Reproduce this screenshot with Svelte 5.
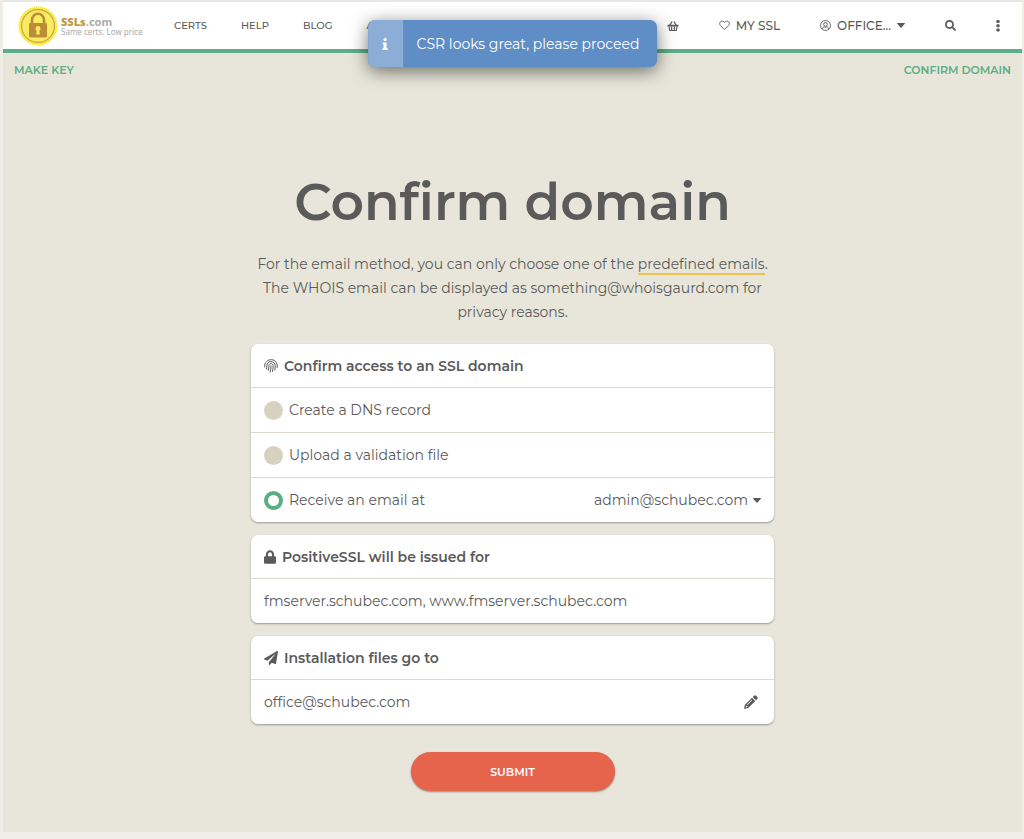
<script>
  let method = $state('email');
  let email = $state('admin@schubec.com');

  const links = ['CERTS', 'HELP', 'BLOG', 'API'];
  const methods = [
    { id: 'dns', label: 'Create a DNS record' },
    { id: 'file', label: 'Upload a validation file' },
    { id: 'email', label: 'Receive an email at' }
  ];
</script>

<div class="page">
  <header>
    <a class="brand" href="#home">
      <svg width="40" height="40" viewBox="0 0 40 40" aria-hidden="true">
        <circle cx="20" cy="20" r="18.6" fill="#f7ea4e" />
        <circle cx="20" cy="20" r="18.8" fill="none" stroke="#f4e52f" stroke-width="1.6" stroke-dasharray="1.2 0.8" />
        <circle cx="20" cy="20" r="16.4" fill="#f8ec62" stroke="#cfa63a" stroke-width="1.2" />
        <path d="M14 18v-4.2a6 6 0 0 1 12 0V18" fill="none" stroke="#bd8c36" stroke-width="2.6" />
        <rect x="11" y="17" width="18" height="14.4" rx="1.4" fill="#bd8c36" />
        <path d="M20 20a2.6 2.6 0 0 1 1.3 4.8l.6 3.7h-3.8l.6-3.7A2.6 2.6 0 0 1 20 20z" fill="#f8ec62" />
      </svg>
      <span class="words">
        <span class="name"><b>SSLs</b>.com</span>
        <span class="tag">Same certs. Low price</span>
      </span>
    </a>
    <nav class="main">
      {#each links as link}
        <a href="#{link.toLowerCase()}">{link}</a>
      {/each}
    </nav>
    <nav class="account">
      <a href="#cart" aria-label="Cart">
        <svg width="12" height="12" viewBox="0 0 24 24" fill="none" stroke="currentColor" aria-hidden="true">
          <path d="M5.5 11 10 3M18.500 11 14 3" stroke-width="2.600" />
          <path d="M1 9.500h22v3.500H1z" fill="currentColor" stroke="none" />
          <path d="M4 13l1.500 8h13L20 13M9.300 13v8M14.700 13v8" stroke-width="2.400" />
        </svg>
      </a>
      <a href="#my-ssl">
        <svg width="11" height="11" viewBox="0 0 24 24" fill="none" stroke="currentColor" stroke-width="2" aria-hidden="true">
          <path d="M12 21 3.300 12.200C-.6 8 2.200 2.500 7 2.500c2.300 0 4 1.200 5 3 1-1.800 2.700-3 5-3 4.800 0 7.600 5.500 3.700 9.700z" />
        </svg>
        MY SSL
      </a>
      <button type="button">
        <svg width="11" height="11" viewBox="0 0 24 24" fill="none" stroke="currentColor" stroke-width="2" aria-hidden="true">
          <circle cx="12" cy="12" r="10.800" />
          <circle cx="12" cy="9.500" r="4" />
          <path d="M5 19.500c.5-3 2.300-4.500 4-4.500 1 0 1.500.6 3 .6s2-.6 3-.6c1.700 0 3.500 1.500 4 4.500" />
        </svg>
        OFFICE...
        <svg class="caret" width="8" height="5" viewBox="0 0 8 5" fill="currentColor" aria-hidden="true"><path d="M.4 0h7.200q.6.200.2.700L4.500 4.600q-.5.500-1 0L.2.700Q-.2.200.4 0z" /></svg>
      </button>
      <button type="button" aria-label="Search">
        <svg width="11" height="11" viewBox="0 0 512 512" fill="currentColor" aria-hidden="true"><path d="M505 442.700L405.300 343c-4.500-4.500-10.600-7-17-7H372c27.600-35.300 44-79.700 44-128C416 93.100 322.900 0 208 0S0 93.100 0 208s93.100 208 208 208c48.300 0 92.700-16.400 128-44v16.300c0 6.400 2.500 12.500 7 17l99.700 99.700c9.400 9.400 24.600 9.400 33.900 0l28.300-28.300c9.400-9.400 9.400-24.600.1-34zM208 336c-70.700 0-128-57.200-128-128 0-70.700 57.200-128 128-128 70.700 0 128 57.200 128 128 0 70.700-57.200 128-128 128z" /></svg>
      </button>
      <button type="button" aria-label="More">
        <svg width="4" height="12" viewBox="0 0 4 12" fill="currentColor" aria-hidden="true"><rect x=".3" y="0" width="3.400" height="3" rx="1.200" /><rect x=".3" y="4.200" width="3.400" height="3" rx="1.200" /><rect x=".3" y="8.400" width="3.400" height="3" rx="1.200" /></svg>
      </button>
    </nav>
  </header>

  <div class="toast" role="status">
    <span class="info">
      <svg width="6" height="12" viewBox="0 0 6 12" fill="#fff" aria-hidden="true"><circle cx="3" cy="1.600" r="1.600" /><path d="M.6 4.500h3.900V10H5.500v2H.5v-2h1V6.500H.6z" /></svg>
    </span>
    <span class="message">CSR looks great, please proceed</span>
  </div>

  <div class="steps">
    <a href="#make-key">MAKE KEY</a>
    <a href="#confirm">CONFIRM DOMAIN</a>
  </div>

  <main>
    <h1>Confirm domain</h1>
    <p>
      For the email method, you can only choose one of the <a href="#emails">predefined emails</a>.<br />
      The WHOIS email can be displayed as something@whoisgaurd.com for<br />
      privacy reasons.
    </p>

    <form onsubmit={(e) => e.preventDefault()}>
      <section>
        <h2>
          <svg width="14" height="14" viewBox="0 0 28 28" fill="none" stroke="currentColor" stroke-width="2" stroke-linecap="round" aria-hidden="true">
            <path d="M1.500 16v-3.500C1.500 10.500 2 9 3 7.500M5.500 4.500C11 -.5 20 .2 24.300 6.500c1.500 2.200 2.200 4.500 2.200 7.500v3" />
            <path d="M5 20c.6-2.500.7-4.500.7-7C5.700 8.500 9.500 5 14 5s8.500 3.600 8.500 8.500c0 3-.2 6-.8 8.500" />
            <path d="M8.800 22.500c.8-3.500 1-6 1-9.500 0-2.200 2-4 4.200-4s4.300 1.800 4.300 4.300c0 4-.4 8-1.400 11.700" />
            <path d="M14 13.500c0 4.500-.5 9-1.800 13" />
          </svg>
          Confirm access to an SSL domain
        </h2>
        {#each methods as m}
          <div class="row">
            <label>
              <input type="radio" name="method" value={m.id} bind:group={method} />
              {m.label}
            </label>
            {#if m.id === 'email'}
              <span class="picker">
                <select bind:value={email} aria-label="Email address">
                  <option value="admin@schubec.com">admin@schubec.com</option>
                </select>
                <svg class="caret" width="8" height="5" viewBox="0 0 8 5" fill="currentColor" aria-hidden="true"><path d="M.4 0h7.200q.6.200.2.700L4.500 4.600q-.5.500-1 0L.2.700Q-.2.200.4 0z" /></svg>
              </span>
            {/if}
          </div>
        {/each}
      </section>

      <section>
        <h2>
          <svg width="12" height="14" viewBox="0 0 448 512" fill="currentColor" aria-hidden="true"><path d="M400 224h-24v-72C376 68.200 307.800 0 224 0S72 68.200 72 152v72H48c-26.500 0-48 21.500-48 48v192c0 26.500 21.500 48 48 48h352c26.500 0 48-21.500 48-48V272c0-26.500-21.500-48-48-48zm-104 0H152v-72c0-39.700 32.300-72 72-72s72 32.300 72 72v72z" /></svg>
          PositiveSSL will be issued for
        </h2>
        <div class="row">fmserver.schubec.com, www.fmserver.schubec.com</div>
      </section>

      <section>
        <h2>
          <svg width="14" height="14" viewBox="0 0 512 512" fill="currentColor" aria-hidden="true"><path d="M476 3.200L12.500 270.600c-18.100 10.400-15.800 35.600 2.200 43.200L121 358.400l287.300-253.200c5.500-4.900 13.300 2.600 8.600 8.300L176 407v80.500c0 23.600 28.500 32.900 42.500 15.800L282 426l124.600 52.200c14.200 6 30.400-2.900 33-18.200l72-432C515 7.800 493.300-6.800 476 3.200z" /></svg>
          Installation files go to
        </h2>
        <div class="row">
          office@schubec.com
          <button class="edit" type="button" aria-label="Edit email">
            <svg width="14" height="14" viewBox="0 0 28 28" fill="currentColor" aria-hidden="true">
              <path d="M20 1.500q2-2 4 0L26.500 4q2 2 0 4l-2.600 2.600-6.500-6.500z" />
              <path fill-rule="evenodd" d="M16 5.500l6.500 6.500L8.300 26.200 0 28l1.800-8.300zM15.300 9.500 6 18.800l1 1 9.300-9.300zM4.300 21.200l-1 3.600 3.600-.9v-1.700H5.700z" />
            </svg>
          </button>
        </div>
      </section>

      <button class="submit" type="submit">SUBMIT</button>
    </form>
  </main>
</div>

<style>
  :global(body) {
    margin: 0;
    background: #f0ede6;
  }
  .page {
    position: relative;
    margin: 0 2px 7px 3px;
    border-top: 2px solid #e6e6e6;
    background: #e8e6da;
    color: #5a5a5a;
    font-family: Montserrat, Inter, sans-serif;
    font-size: 14px;
    box-sizing: border-box;
    min-height: calc(100vh - 7px);
  }
  a {
    color: inherit;
    text-decoration: none;
  }
  button {
    padding: 0;
    border: 0;
    background: none;
    color: inherit;
    font: inherit;
    cursor: pointer;
  }
  svg {
    flex: none;
  }
  header {
    display: flex;
    align-items: center;
    height: 47px;
    padding: 0 22px 0 15px;
    background: #fff;
    border-bottom: 4px solid #5bae85;
  }
  .brand {
    display: flex;
    align-items: center;
    gap: 3px;
    width: 156px;
  }
  .words {
    display: flex;
    flex-direction: column;
    font-family: "Noto Sans", "Open Sans", sans-serif;
    color: #aaa;
    white-space: nowrap;
  }
  .name {
    font-size: 11px;
    line-height: 11px;
    font-weight: 700;
  }
  .name b {
    color: #c29a41;
  }
  .tag {
    font-size: 8px;
    line-height: 9px;
  }
  nav {
    display: flex;
    align-items: center;
  }
  .main {
    gap: 34px;
    font-size: 10px;
    font-weight: 500;
  }
  .account {
    margin-left: auto;
    gap: 40px;
    font-size: 12px;
    font-weight: 500;
  }
  .account a,
  .account button {
    display: flex;
    align-items: center;
    gap: 6px;
  }
  .toast {
    position: absolute;
    top: 18px;
    left: 50%;
    transform: translateX(-50%);
    display: flex;
    height: 47px;
    border-radius: 7px;
    overflow: hidden;
    background: #5f8dc5;
    color: #fff;
    white-space: nowrap;
    box-shadow: 0 4px 18px rgba(0, 0, 0, 0.55);
  }
  .info {
    display: grid;
    place-items: center;
    width: 35px;
    background: #8caed6;
  }
  .message {
    display: flex;
    align-items: center;
    padding: 0 18px 0 14px;
  }
  .steps {
    display: flex;
    justify-content: space-between;
    padding: 10px 11px;
    color: #5bae85;
    font-size: 11px;
    line-height: 14px;
    font-weight: 600;
  }
  main {
    display: flex;
    flex-direction: column;
    align-items: center;
    padding: 83px 16px 40px;
  }
  h1 {
    margin: 0;
    font-size: 52px;
    line-height: 64px;
    font-weight: 600;
  }
  p {
    margin: 18px 0 20px;
    line-height: 24px;
    text-align: center;
  }
  p a {
    border-bottom: 2px solid #f2c14e;
  }
  form {
    display: flex;
    flex-direction: column;
    align-items: center;
    gap: 13px;
    width: 100%;
    max-width: 523px;
  }
  section {
    width: 100%;
    border-radius: 7px;
    background: #fff;
    box-shadow: 0 1px 2px rgba(0, 0, 0, 0.35);
  }
  h2 {
    display: flex;
    align-items: center;
    gap: 6px;
    height: 43px;
    margin: 0;
    padding: 0 13px;
    font-size: 14px;
    font-weight: 600;
  }
  .row {
    display: flex;
    align-items: center;
    justify-content: space-between;
    height: 44px;
    padding: 0 13px;
    border-top: 1px solid #dedbcd;
  }
  label {
    display: flex;
    align-items: center;
    gap: 6px;
  }
  input {
    appearance: none;
    width: 19px;
    height: 19px;
    margin: 0;
    border-radius: 50%;
    background: #d7d2c0;
  }
  input:checked {
    border: 4px solid #5bae85;
    background: #fff;
  }
  .picker {
    display: flex;
    align-items: center;
    gap: 4px;
  }
  select {
    appearance: none;
    padding: 0;
    border: 0;
    background: none;
    color: inherit;
    font: inherit;
  }
  .edit {
    display: flex;
    margin-right: 3px;
  }
  .submit {
    width: 204px;
    height: 39px;
    margin-top: 15px;
    border-radius: 20px;
    background: #e6644b;
    color: #fff;
    font-size: 11px;
    font-weight: 600;
    box-shadow: 0 1px 2px rgba(0, 0, 0, 0.4);
  }
</style>
